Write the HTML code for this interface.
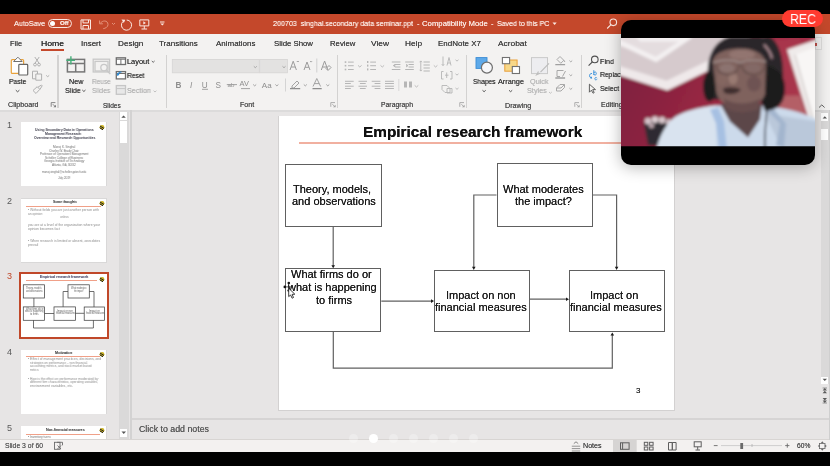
<!DOCTYPE html>
<html><head><meta charset="utf-8"><style>
*{box-sizing:border-box;margin:0;padding:0}
html,body{width:830px;height:466px;overflow:hidden;background:#000}
body{position:relative;font-family:"Liberation Sans",sans-serif;-webkit-font-smoothing:antialiased}
.a{position:absolute}
.t{position:absolute;white-space:nowrap;line-height:1;will-change:transform;text-shadow:0 0 0.25px currentColor}
.box{position:absolute;border:1.3px solid #606060;background:#fff}
.thumb{position:absolute;background:#fff;overflow:hidden}
svg{position:absolute;overflow:visible}
</style></head><body>
<div class="a" style="left:0px;top:13.6px;width:830px;height:20.6px;background:#C4482B;"></div>
<div class="a" style="left:0px;top:34px;width:830px;height:76px;background:#F3F2F1;"></div>
<div class="a" style="left:0px;top:110px;width:830px;height:2px;background:#DCDBDB;"></div>
<div class="a" style="left:0px;top:112px;width:130px;height:328px;background:#E7E5E5;"></div>
<div class="a" style="left:130px;top:110px;width:2px;height:330px;background:#D3D2D2;"></div>
<div class="a" style="left:132px;top:112px;width:698px;height:306px;background:#E7E5E5;"></div>
<div class="a" style="left:132px;top:419px;width:698px;height:21px;background:#E7E5E5;"></div>
<div class="a" style="left:132px;top:418.2px;width:698px;height:1.5px;background:#D6D4D4;"></div>
<div class="a" style="left:0px;top:440px;width:830px;height:12px;background:#F3F1F0;"></div>
<div class="t" style="left:13.6px;top:19.68px;font-size:7.7px;color:#FAE8E2;transform:scaleX(0.9357);transform-origin:0 0;">AutoSave</div>
<div class="a" style="left:48px;top:18.5px;width:24px;height:9.8px;border:1px solid #FAE8E2;border-radius:5px"></div>
<div class="a" style="left:50.4px;top:21px;width:5px;height:5px;background:#fff;border-radius:50%"></div>
<div class="t" style="left:59.5px;top:20.45px;font-size:6.2px;color:#FAE8E2;font-weight:bold;transform:scaleX(0.9622);transform-origin:0 0;">Off</div>
<div class="t" style="left:272.9px;top:19.56px;font-size:7.6px;color:#FAE8E2;transform:scaleX(0.9394);transform-origin:0 0;">200703&nbsp; singhal.secondary data seminar.ppt</div>
<div class="t" style="left:417.0px;top:19.65px;font-size:7.5px;color:#FAE8E2;">-</div>
<div class="t" style="left:422.3px;top:19.56px;font-size:7.6px;color:#FAE8E2;transform:scaleX(1.0189);transform-origin:0 0;">Compatibility Mode</div>
<div class="t" style="left:491.0px;top:19.65px;font-size:7.5px;color:#FAE8E2;">-</div>
<div class="t" style="left:496.5px;top:19.56px;font-size:7.6px;color:#FAE8E2;transform:scaleX(0.9264);transform-origin:0 0;">Saved to this PC</div>
<svg style="left:0;top:0" width="830" height="40">
<g fill="none" stroke="#FAE8E2" stroke-width="1">
<path d="M81 19.9h9.5v9.2h-9.5z"/><path d="M83 19.9v3h5.5v-3"/><path d="M83 29.1v-3.6h5.5v3.6"/>
<path d="M122.8 21.6a5.1 5.1 0 1 0 3.9 -1.6"/>
<path d="M139.8 19.9h9v6h-9z"/><path d="M144.3 25.9v3M141.5 29h5.6"/>
<path d="M160 22h4.5"/>
</g>
<path d="M121.5 19.5l3.8 0.3l-1.5 3.3z" fill="#FAE8E2"/>
<path d="M143.3 21.3v3.2l2.6-1.6z" fill="#FAE8E2"/>
<path d="M160.3 23.6h4l-2 2z" fill="#FAE8E2"/>
<g fill="none" stroke="#E3917A" stroke-width="1">
<path d="M100.3 23.3c2-3 7.5-3.5 7.7 1.2c0.1 2.5-2.5 3.8-4.8 4.2"/><path d="M99.6 20.5v3.3h3.3"/>
<path d="M112 23l1.5 1.5l1.5-1.5"/>
</g>
<path d="M552.5 22.5h4.2l-2.1 2.6z" fill="#FAE8E2"/>
<g fill="none" stroke="#FAE8E2" stroke-width="1.1"><circle cx="613.3" cy="22.3" r="3.3"/><path d="M611 24.7l-3.8 3.8"/></g>
</svg>
<div class="t" style="left:10.0px;top:39.76px;font-size:7.6px;color:#454545;transform:scaleX(0.9796);transform-origin:0 0;">File</div>
<div class="t" style="left:80.5px;top:39.76px;font-size:7.6px;color:#454545;transform:scaleX(1.0526);transform-origin:0 0;">Insert</div>
<div class="t" style="left:117.5px;top:39.76px;font-size:7.6px;color:#454545;transform:scaleX(1.0744);transform-origin:0 0;">Design</div>
<div class="t" style="left:159.1px;top:39.76px;font-size:7.6px;color:#454545;transform:scaleX(1.0526);transform-origin:0 0;">Transitions</div>
<div class="t" style="left:215.7px;top:39.76px;font-size:7.6px;color:#454545;transform:scaleX(1.0511);transform-origin:0 0;">Animations</div>
<div class="t" style="left:273.9px;top:39.76px;font-size:7.6px;color:#454545;transform:scaleX(1.0263);transform-origin:0 0;">Slide Show</div>
<div class="t" style="left:329.5px;top:39.76px;font-size:7.6px;color:#454545;transform:scaleX(1.0198);transform-origin:0 0;">Review</div>
<div class="t" style="left:370.5px;top:39.76px;font-size:7.6px;color:#454545;transform:scaleX(1.1024);transform-origin:0 0;">View</div>
<div class="t" style="left:404.5px;top:39.76px;font-size:7.6px;color:#454545;transform:scaleX(1.0880);transform-origin:0 0;">Help</div>
<div class="t" style="left:438.4px;top:39.76px;font-size:7.6px;color:#454545;transform:scaleX(1.0500);transform-origin:0 0;">EndNote X7</div>
<div class="t" style="left:498.1px;top:39.76px;font-size:7.6px;color:#454545;transform:scaleX(1.1004);transform-origin:0 0;">Acrobat</div>
<div class="t" style="left:41.2px;top:39.59px;font-size:7.8px;color:#2a2a2a;transform:scaleX(1.1051);transform-origin:0 0;text-shadow:0 0 0.6px #2a2a2a">Home</div>
<div class="a" style="left:41px;top:49px;width:23px;height:2px;background:#C4482B;"></div>
<div class="t" style="left:8.2px;top:102.14px;font-size:7.15px;color:#505050;">Clipboard</div>
<div class="t" style="left:103.1px;top:102.69px;font-size:6.5px;color:#505050;">Slides</div>
<div class="t" style="left:239.6px;top:102.15px;font-size:7.14px;color:#505050;">Font</div>
<div class="t" style="left:380.6px;top:102.40px;font-size:6.85px;color:#505050;">Paragraph</div>
<div class="t" style="left:505.1px;top:102.10px;font-size:7.2px;color:#505050;">Drawing</div>
<div class="t" style="left:600.6px;top:102.19px;font-size:7.1px;color:#505050;">Editing</div>
<div class="a" style="left:57.4px;top:54.6px;width:1.2px;height:53px;background:#D3D2D1;"></div>
<div class="a" style="left:166.0px;top:54.6px;width:1.2px;height:53px;background:#D3D2D1;"></div>
<div class="a" style="left:336.8px;top:54.6px;width:1.2px;height:53px;background:#D3D2D1;"></div>
<div class="a" style="left:465.8px;top:54.6px;width:1.2px;height:53px;background:#D3D2D1;"></div>
<div class="a" style="left:580.8px;top:54.6px;width:1.2px;height:53px;background:#D3D2D1;"></div>
<div class="t" style="left:9.0px;top:78.12px;font-size:7.3px;color:#3F3F3F;transform:scaleX(0.9319);transform-origin:0 0;">Paste</div>
<div class="t" style="left:68.9px;top:77.82px;font-size:7.3px;color:#3F3F3F;transform:scaleX(0.9857);transform-origin:0 0;">New</div>
<div class="t" style="left:64.6px;top:87.02px;font-size:7.3px;color:#3F3F3F;transform:scaleX(0.9609);transform-origin:0 0;">Slide</div>
<div class="t" style="left:91.8px;top:77.82px;font-size:7.3px;color:#B8B8B8;transform:scaleX(0.8818);transform-origin:0 0;">Reuse</div>
<div class="t" style="left:92.2px;top:87.02px;font-size:7.3px;color:#B8B8B8;transform:scaleX(0.9157);transform-origin:0 0;">Slides</div>
<div class="t" style="left:127.2px;top:58.12px;font-size:7.3px;color:#3F3F3F;transform:scaleX(1.0127);transform-origin:0 0;">Layout</div>
<div class="t" style="left:127.2px;top:72.42px;font-size:7.3px;color:#3F3F3F;transform:scaleX(0.9128);transform-origin:0 0;">Reset</div>
<div class="t" style="left:127.2px;top:86.62px;font-size:7.3px;color:#B5B5B5;transform:scaleX(0.9777);transform-origin:0 0;">Section</div>
<div class="t" style="left:472.6px;top:77.62px;font-size:7.3px;color:#3F3F3F;transform:scaleX(0.9131);transform-origin:0 0;">Shapes</div>
<div class="t" style="left:498.2px;top:77.62px;font-size:7.3px;color:#3F3F3F;transform:scaleX(0.9935);transform-origin:0 0;">Arrange</div>
<div class="t" style="left:529.9px;top:77.62px;font-size:7.3px;color:#B8B8B8;transform:scaleX(0.9863);transform-origin:0 0;">Quick</div>
<div class="t" style="left:526.6px;top:87.42px;font-size:7.3px;color:#B8B8B8;transform:scaleX(0.9862);transform-origin:0 0;">Styles</div>
<div class="t" style="left:599.8px;top:57.52px;font-size:7.3px;color:#3F3F3F;transform:scaleX(0.9716);transform-origin:0 0;">Find</div>
<div class="t" style="left:599.8px;top:71.32px;font-size:7.3px;color:#3F3F3F;transform:scaleX(0.9148);transform-origin:0 0;">Replace</div>
<div class="t" style="left:599.8px;top:85.42px;font-size:7.3px;color:#3F3F3F;transform:scaleX(0.9368);transform-origin:0 0;">Select</div>
<svg style="left:0;top:0" width="830" height="112">
<!-- paste -->
<rect x="11.3" y="59.6" width="12.3" height="13.8" rx="1" fill="#fff" stroke="#E9A23B" stroke-width="1.2"/>
<path d="M13.6 61.5l4.3-4.3l4.3 4.3z" fill="#fff" stroke="#707070" stroke-width="1"/>
<rect x="18.8" y="64.4" width="8.9" height="10.6" rx="0.8" fill="#fff" stroke="#666" stroke-width="1.2"/>
<path d="M15.8 90.2l1.8 1.6l1.8-1.6" fill="none" stroke="#555" stroke-width="1"/>
<!-- cut / copy / painter (disabled) -->
<g fill="none" stroke="#B0B0B0" stroke-width="1">
<path d="M34.8 57l4.2 6.2M39.2 57l-4.2 6.2"/><circle cx="35" cy="64.6" r="1.4"/><circle cx="39" cy="64.6" r="1.4"/>
<path d="M32.5 71.2h5v7.6h-5z"/><path d="M35.8 74h5.8v6.2h-5.8z" fill="#F3F2F1"/>
<path d="M46.2 75.4l1.5 1.3l1.5-1.3"/>
<path d="M33 90.5l4.2-3.8l2.6 2.6l-3.8 4.2z"/><path d="M37.8 87.3l3.6-2.3l0.8 0.8l-2.3 3.6"/>
</g>
<!-- launcher clipboard -->
<path d="M51.2 106.8v-4.2h4.2M52.8 104.2l2.6 2.6" fill="none" stroke="#7A7A7A" stroke-width="0.9"/><path d="M56 107.3h-2.6l2.6-2.6z" fill="#7A7A7A"/>
<!-- new slide -->
<g fill="none" stroke="#767676" stroke-width="1.5">
<rect x="67.4" y="59.4" width="17.2" height="12.5"/>
<path d="M67.4 63.6h17.2M75.7 63.6v8.3"/>
</g>
<path d="M66.3 60.2h8.7M70.9 56.2v8.3" stroke="#46B07A" stroke-width="1.4"/>
<path d="M82.3 90l1.6 1.5l1.6-1.5" fill="none" stroke="#555" stroke-width="1"/>
<!-- reuse slides (disabled) -->
<g fill="none" stroke="#C8C8C8" stroke-width="1.3">
<rect x="93.2" y="59.2" width="16.4" height="12.8"/><rect x="95" y="61.4" width="13" height="9.6"/>
<circle cx="104" cy="67.6" r="3.2"/><path d="M106.3 70l4 4"/>
</g>
<!-- layout / reset / section -->
<rect x="116.3" y="57.8" width="9.2" height="6.7" fill="#fff" stroke="#6F6F6F" stroke-width="1.3"/>
<path d="M116.3 59.2h9.2M120.9 59.2v5.3" stroke="#6F6F6F" stroke-width="1"/>
<path d="M151.8 61l1.4 1.3l1.4-1.3" fill="none" stroke="#555" stroke-width="0.9"/>
<rect x="116.3" y="71.6" width="9.2" height="7.3" fill="#fff" stroke="#6F6F6F" stroke-width="1.3"/>
<path d="M116.3 73.5h9.2" stroke="#6F6F6F" stroke-width="1"/>
<path d="M117.5 75.5c0.5-2.5 2-3.5 4-3.5" fill="none" stroke="#2B8CD8" stroke-width="1.2"/><path d="M116.6 73.3l1.2 2.8l1.8-2.2z" fill="#2B8CD8"/>
<rect x="116.3" y="85.6" width="9.2" height="8.7" fill="#E8E8E8" stroke="#C6C6C6" stroke-width="1.3"/>
<path d="M116.3 88.6h9.2" stroke="#C6C6C6" stroke-width="1"/>
<path d="M153.6 90.7l1.4 1.3l1.4-1.3" fill="none" stroke="#BBB" stroke-width="0.9"/>
<!-- font boxes -->
<rect x="172.3" y="59.4" width="87" height="13.4" fill="#E3E2E1" stroke="#D6D5D4" stroke-width="0.8"/>
<rect x="259.7" y="59.4" width="27.8" height="13.4" fill="#E3E2E1" stroke="#D6D5D4" stroke-width="0.8"/>
<path d="M253.8 66.3l1.5 1.4l1.5-1.4M282.5 66.3l1.5 1.4l1.5-1.4" fill="none" stroke="#A0A0A0" stroke-width="0.9"/>
<g fill="none" stroke="#9A9A9A" stroke-width="1">
<path d="M290 70l3.2-8.8l3.2 8.8M291.2 67h4"/><path d="M296.8 62l1 -1l1 1"/>
<path d="M304 70l3-8l3 8M305.1 67.3h3.8"/><path d="M310.2 61.2l0.9 0.9l0.9-0.9"/>
<path d="M316.8 58.5v14" stroke="#D0D0D0"/>
<path d="M321.3 70l3.3-9l3.3 9M322.5 67h4.2"/><path d="M326 68.5l3-3l2 2l-3 3z"/>
</g>
<g fill="#8E8E8E" font-family="Liberation Sans" font-size="8.2">
<text x="175.6" y="87.8" font-weight="bold">B</text>
<text x="190" y="87.8" font-style="italic">I</text>
<text x="201.8" y="87.6">U</text>
<text x="215.6" y="87.8">S</text>
<text x="227.5" y="87.3" font-size="6.2">ab</text>
<text x="239.6" y="86.4" font-size="7.4">AV</text>
<text x="261.8" y="87.8" font-size="8">Aa</text>
</g>
<g fill="none" stroke="#9A9A9A" stroke-width="0.9">
<path d="M202 89.3h6M226.8 84.6h10.2M241 88.6h9"/>
<path d="M253.2 84.5l1.5 1.4l1.5-1.4M275.4 84.5l1.5 1.4l1.5-1.4M303.8 84.5l1.5 1.4l1.5-1.4M326.3 84.5l1.5 1.4l1.5-1.4"/>
<path d="M285.5 78.5v13" stroke="#D0D0D0"/>
<path d="M292 86l5-5l2 2l-5 5h-2z"/><path d="M313 86.5l3.8-8l3.8 8M314.4 83.6h4.8"/>
</g>
<path d="M290 88.7h10.2M312.5 88.7h9.2" stroke="#8E8E8E" stroke-width="1.3"/>
<path d="M330.8 106.8v-4.2h4.2M332.4 104.2l2.6 2.6" fill="none" stroke="#A5A5A5" stroke-width="0.9"/><path d="M335.6 107.3h-2.6l2.6-2.6z" fill="#A5A5A5"/>
<!-- paragraph -->
<g fill="#B6B6B6">
<rect x="344.7" y="61.3" width="1.6" height="1.6"/><rect x="344.7" y="64.9" width="1.6" height="1.6"/><rect x="344.7" y="68.7" width="1.6" height="1.6"/>
<rect x="348" y="61.6" width="5.7" height="1"/><rect x="348" y="65.2" width="5.7" height="1"/><rect x="348" y="69" width="5.7" height="1"/>
<rect x="367" y="61" width="1.4" height="2"/><rect x="367" y="64.6" width="1.4" height="2"/><rect x="367" y="68.4" width="1.4" height="2"/>
<rect x="370.2" y="61.6" width="5.8" height="1"/><rect x="370.2" y="65.2" width="5.8" height="1"/><rect x="370.2" y="69" width="5.8" height="1"/>
<rect x="391.8" y="61.5" width="8.6" height="1"/><rect x="395" y="64" width="5.4" height="1"/><rect x="395" y="66.5" width="5.4" height="1"/><rect x="391.8" y="69" width="8.6" height="1"/>
<rect x="405.2" y="61.5" width="8.6" height="1"/><rect x="408.6" y="64" width="5.2" height="1"/><rect x="408.6" y="66.5" width="5.2" height="1"/><rect x="405.2" y="69" width="8.6" height="1"/>
<rect x="423.5" y="61.5" width="6.3" height="1"/><rect x="423.5" y="64.5" width="6.3" height="1"/><rect x="423.5" y="67.5" width="6.3" height="1"/><rect x="423.5" y="70.5" width="6.3" height="1"/>
<rect x="345" y="80.8" width="8.7" height="1"/><rect x="345" y="83" width="5.8" height="1"/><rect x="345" y="85.7" width="8.7" height="1"/><rect x="345" y="88" width="5.8" height="1"/>
<rect x="358.5" y="80.8" width="8.5" height="1"/><rect x="359.9" y="83" width="5.8" height="1"/><rect x="358.5" y="85.7" width="8.5" height="1"/><rect x="359.9" y="88" width="5.8" height="1"/>
<rect x="371.7" y="80.8" width="8.7" height="1"/><rect x="374.6" y="83" width="5.8" height="1"/><rect x="371.7" y="85.7" width="8.7" height="1"/><rect x="374.6" y="88" width="5.8" height="1"/>
<rect x="385" y="80.8" width="8.9" height="1"/><rect x="385" y="83" width="8.9" height="1"/><rect x="385" y="85.7" width="8.9" height="1"/><rect x="385" y="88" width="8.9" height="1"/>
<rect x="404" y="81.5" width="3" height="6"/><rect x="409" y="81.5" width="3" height="6"/>
</g>
<g fill="none" stroke="#B6B6B6" stroke-width="0.9">
<path d="M358 65.4l1.8 1.6l1.8-1.6M380.5 65.4l1.8 1.6l1.8-1.6M433.8 65.4l1.8 1.6l1.8-1.6M414.7 85.4l1.8 1.6l1.8-1.6"/>
<path d="M393.3 65.6l1.5-1.2v2.4zM406.2 64.3l1.8 1.3l-1.8 1.3" fill="#B6B6B6"/>
<path d="M420.8 61v10M419.7 62.2l1.1-1.3l1.1 1.3M419.7 69.8l1.1 1.3l1.1-1.3"/>
<path d="M398.8 79v12" stroke="#D6D6D6"/>
<path d="M443 56.5v9M441.8 64.2l1.2 1.4l1.2-1.4M447 65.5l2-8l2 8M447.6 63h2.8"/>
<path d="M455.5 59.8l1.5 1.3l1.5-1.3M455.5 73.8l1.5 1.3l1.5-1.3M455.5 88l1.5 1.3l1.5-1.3"/>
<path d="M441.5 71.5h2M441.5 71.5v7.5h2M450 71.5h2v7.5h-2M446.7 72.5v5.5M445 75.2h3.5"/>
<path d="M442 85.5h5l3 3v4h-5l-3-3z"/><path d="M447 88.5h5v4.5h-5z"/>
</g>
<path d="M459.8 106.8v-4.2h4.2M461.4 104.2l2.6 2.6" fill="none" stroke="#A5A5A5" stroke-width="0.9"/><path d="M464.6 107.3h-2.6l2.6-2.6z" fill="#A5A5A5"/>
<!-- drawing -->
<rect x="476" y="57.6" width="11" height="10.8" fill="#5EA9E9" stroke="#3A8CD5" stroke-width="0.9"/>
<circle cx="486.9" cy="67.6" r="5.5" fill="#F7F7F9" stroke="#6E6E6E" stroke-width="1.2"/>
<path d="M482.5 90.3l1.6 1.4l1.6-1.4M509 90.3l1.6 1.4l1.6-1.4" fill="none" stroke="#555" stroke-width="1"/>
<rect x="504.8" y="60" width="12.3" height="11.2" fill="#F8D888" stroke="#E9A03B" stroke-width="1"/>
<rect x="502.4" y="57.5" width="7.2" height="6.2" fill="#fff" stroke="#717171" stroke-width="1.1"/>
<rect x="512.3" y="66.5" width="7.2" height="7" fill="#fff" stroke="#717171" stroke-width="1.1"/>
<rect x="531.5" y="57.6" width="16" height="16" fill="#EDEDF0" stroke="#C9C9C9" stroke-width="1"/>
<path d="M549 63.4l-8.5 8.8M538.5 71.5l-1.8 3.2l3.2-1.5" fill="none" stroke="#BDBDBD" stroke-width="1.2"/>
<path d="M549 92l1.4 1.3l1.4-1.3" fill="none" stroke="#BBB" stroke-width="0.9"/>
<g fill="none" stroke="#A8A8A8" stroke-width="1">
<path d="M557 59.5l3-3l3.8 3.8l-3 3z"/><path d="M563.5 60l1.5 2"/>
<path d="M557 70.5h6.5M557 70.5v6h3M562.5 76.5l3-5.5"/>
<path d="M556.5 88l3.5-3.5h4.5l-3.5 3.5zM556.5 88v3h4.5l3.5-3.5v-3"/>
<path d="M569.4 60.6l1.4 1.3l1.4-1.3M569.4 74.5l1.4 1.3l1.4-1.3M569.4 88.1l1.4 1.3l1.4-1.3"/>
</g>
<path d="M555.3 64.6h9.8M555.3 78h9.8" stroke="#A0A0A0" stroke-width="1.3"/>
<path d="M574.8 106.8v-4.2h4.2M576.4 104.2l2.6 2.6" fill="none" stroke="#A5A5A5" stroke-width="0.9"/><path d="M579.6 107.3h-2.6l2.6-2.6z" fill="#A5A5A5"/>
<!-- editing -->
<circle cx="594.8" cy="59.4" r="3.3" fill="none" stroke="#505050" stroke-width="1.1"/>
<path d="M592.4 61.8l-3.8 3.8" stroke="#505050" stroke-width="1.2"/>
<g fill="none" stroke="#2F8BD8" stroke-width="0.9">
<path d="M592 73.5c-3-0.5-3.5 4.5-0.2 4.5M590.2 77.8l1.5 0.3l-0.6-1.5"/>
<path d="M593.8 70.2v4.8M593.8 73c0.3-1.5 2.5-1.5 2.5 0.5c0 2-2.2 2-2.5 0.5"/>
<path d="M597 78.2c-0.5-1-2-1-2.2 0.5c0 1.5 1.7 1.5 2.2 0.5"/>
</g>
<path d="M589.4 84.2v8l2-2l1.6 3l1.2-0.6l-1.5-3h2.8z" fill="none" stroke="#505050" stroke-width="0.9"/>
</svg>
<div class="t" style="left:7.2px;top:120.68px;font-size:9px;color:#595959;text-shadow:none">1</div>
<div class="t" style="left:7.2px;top:197.18px;font-size:9px;color:#595959;text-shadow:none">2</div>
<div class="t" style="left:7.2px;top:272.38px;font-size:9px;color:#C0482A;text-shadow:none">3</div>
<div class="t" style="left:7.2px;top:348.38px;font-size:9px;color:#595959;text-shadow:none">4</div>
<div class="t" style="left:7.2px;top:424.38px;font-size:9px;color:#595959;text-shadow:none">5</div>
<div class="a" style="left:20.6px;top:121.89999999999999px;width:86px;height:64.3px;background:#D9D8D8;"></div>
<div class="a" style="left:21.2px;top:122.3px;width:85px;height:63.5px;background:#fff;"></div>
<div class="t" style="left:35.0px;top:129.30px;font-size:3.5px;color:#3A3A48;font-weight:bold;transform:scaleX(0.9674);transform-origin:0 0;text-shadow:none">Using Secondary Data in Operations</div>
<div class="t" style="left:45.0px;top:133.00px;font-size:3.5px;color:#3A3A48;font-weight:bold;transform:scaleX(0.9331);transform-origin:0 0;text-shadow:none">Management Research:</div>
<div class="t" style="left:33.5px;top:137.20px;font-size:3.5px;color:#3A3A48;font-weight:bold;transform:scaleX(0.9663);transform-origin:0 0;text-shadow:none">Overview and Research Opportunities</div>
<div class="t" style="left:52.8px;top:146.39px;font-size:3.3px;color:#6E6E6E;transform:scaleX(0.8922);transform-origin:0 0;text-shadow:none">Manoj K. Singhal</div>
<div class="t" style="left:49.0px;top:149.89px;font-size:3.3px;color:#6E6E6E;transform:scaleX(0.8670);transform-origin:0 0;text-shadow:none">Charles W. Brady Chair</div>
<div class="t" style="left:40.0px;top:153.39px;font-size:3.3px;color:#6E6E6E;transform:scaleX(0.8804);transform-origin:0 0;text-shadow:none">Professor of Operations Management</div>
<div class="t" style="left:45.0px;top:156.89px;font-size:3.3px;color:#6E6E6E;transform:scaleX(0.9081);transform-origin:0 0;text-shadow:none">Scheller College of Business</div>
<div class="t" style="left:44.0px;top:160.39px;font-size:3.3px;color:#6E6E6E;transform:scaleX(0.8847);transform-origin:0 0;text-shadow:none">Georgia Institute of Technology</div>
<div class="t" style="left:52.0px;top:163.89px;font-size:3.3px;color:#6E6E6E;transform:scaleX(0.8503);transform-origin:0 0;text-shadow:none">Atlanta, GA, 30332</div>
<div class="t" style="left:42.0px;top:170.89px;font-size:3.3px;color:#6E6E6E;transform:scaleX(0.8499);transform-origin:0 0;text-shadow:none">manoj.singhal@scheller.gatech.edu</div>
<div class="t" style="left:58.0px;top:177.39px;font-size:3.3px;color:#6E6E6E;transform:scaleX(0.8750);transform-origin:0 0;text-shadow:none">July 2019</div>
<svg style="left:98.5px;top:123.5px" width="6" height="6"><ellipse cx="3" cy="3.2" rx="2.4" ry="2.2" fill="#C9B020"/><path d="M1 2l4 2.5M0.8 3.8l3.2 2" stroke="#222" stroke-width="1"/></svg>
<div class="a" style="left:20.6px;top:198.4px;width:86px;height:64.3px;background:#D9D8D8;"></div>
<div class="a" style="left:21.2px;top:198.8px;width:85px;height:63.5px;background:#fff;"></div>
<div class="t" style="left:52.6px;top:200.65px;font-size:3.8px;color:#222;font-weight:bold;transform:scaleX(0.8683);transform-origin:0 0;text-shadow:none">Some thoughts</div>
<div class="a" style="left:26.3px;top:205.8px;width:75.1px;height:1.0px;background:#F0A088;"></div>
<div class="t" style="left:28.0px;top:208.89px;font-size:3.3px;color:#8C8C8C;transform:scaleX(1.0196);transform-origin:0 0;text-shadow:none">&bull; Without fields you are just another person with</div>
<div class="t" style="left:28.0px;top:212.89px;font-size:3.3px;color:#8C8C8C;transform:scaleX(0.9475);transform-origin:0 0;text-shadow:none">an opinion</div>
<div class="t" style="left:60.0px;top:216.39px;font-size:3.3px;color:#8C8C8C;transform:scaleX(0.8645);transform-origin:0 0;text-shadow:none">unless</div>
<div class="t" style="left:28.0px;top:224.39px;font-size:3.3px;color:#8C8C8C;transform:scaleX(1.0243);transform-origin:0 0;text-shadow:none">you are at a level of the organization where your</div>
<div class="t" style="left:28.0px;top:228.39px;font-size:3.3px;color:#8C8C8C;transform:scaleX(1.0248);transform-origin:0 0;text-shadow:none">opinion becomes fact</div>
<div class="t" style="left:28.0px;top:240.39px;font-size:3.3px;color:#8C8C8C;transform:scaleX(1.0318);transform-origin:0 0;text-shadow:none">&bull; When research is limited or absent, anecdotes</div>
<div class="t" style="left:28.0px;top:244.39px;font-size:3.3px;color:#8C8C8C;transform:scaleX(1.0598);transform-origin:0 0;text-shadow:none">prevail</div>
<svg style="left:99px;top:200px" width="6" height="6"><ellipse cx="3" cy="3.2" rx="2.4" ry="2.2" fill="#C9B020"/><path d="M1 2l4 2.5M0.8 3.8l3.2 2" stroke="#222" stroke-width="1"/></svg>
<div class="a" style="left:19px;top:272px;width:90px;height:66.6px;background:#C0482A;"></div>
<div class="a" style="left:21px;top:274px;width:86px;height:62.6px;background:#fff;"></div>
<div class="t" style="left:39.8px;top:275.65px;font-size:3.8px;color:#2A2A50;font-weight:bold;transform:scaleX(0.8886);transform-origin:0 0;text-shadow:none">Empirical research framework</div>
<div class="a" style="left:26.3px;top:279.7px;width:70.7px;height:1.0px;background:#F0A088;"></div>
<svg style="left:99px;top:275.5px" width="6" height="6"><ellipse cx="3" cy="3.2" rx="2.4" ry="2.2" fill="#C9B020"/><path d="M1 2l4 2.5M0.8 3.8l3.2 2" stroke="#222" stroke-width="1"/></svg>
<svg style="left:0;top:0" width="130" height="440"><g fill="none" stroke="#404040" stroke-width="0.75">
<rect x="23.3" y="284.8" width="21.2" height="13.2"/>
<rect x="23.3" y="306.9" width="21.2" height="13.4"/>
<rect x="54" y="306.9" width="21.5" height="13.4"/>
<rect x="84.2" y="307" width="20.3" height="13.3"/>
<rect x="68" y="284.8" width="21.3" height="13.2"/>
<path d="M33.9 298V306.9M44.5 313.5H54M75.5 313.3H84.2M68 291.5H63.1V306.9M89.3 291.5H94V307M33.5 320.3V328H93.4V320.3"/>
</g></svg>
<div class="t" style="left:26.0px;top:288.33px;font-size:2.6px;color:#606060;transform:scaleX(0.8674);transform-origin:0 0;text-shadow:none">Theory, models,</div>
<div class="t" style="left:26.0px;top:290.93px;font-size:2.6px;color:#606060;transform:scaleX(0.8338);transform-origin:0 0;text-shadow:none">and observations</div>
<div class="t" style="left:25.5px;top:308.73px;font-size:2.6px;color:#606060;transform:scaleX(0.9201);transform-origin:0 0;text-shadow:none">What firms do or</div>
<div class="t" style="left:25.0px;top:311.33px;font-size:2.6px;color:#606060;transform:scaleX(0.8862);transform-origin:0 0;text-shadow:none">what is happening</div>
<div class="t" style="left:30.0px;top:313.93px;font-size:2.6px;color:#606060;transform:scaleX(0.9676);transform-origin:0 0;text-shadow:none">to firms</div>
<div class="t" style="left:57.0px;top:310.73px;font-size:2.6px;color:#606060;transform:scaleX(0.9703);transform-origin:0 0;text-shadow:none">Impact on non</div>
<div class="t" style="left:55.5px;top:313.33px;font-size:2.6px;color:#606060;transform:scaleX(0.8805);transform-origin:0 0;text-shadow:none">financial measures</div>
<div class="t" style="left:89.0px;top:310.73px;font-size:2.6px;color:#606060;transform:scaleX(0.9495);transform-origin:0 0;text-shadow:none">Impact on</div>
<div class="t" style="left:85.5px;top:313.33px;font-size:2.6px;color:#606060;transform:scaleX(0.8567);transform-origin:0 0;text-shadow:none">financial measures</div>
<div class="t" style="left:71.0px;top:288.33px;font-size:2.6px;color:#606060;transform:scaleX(0.8118);transform-origin:0 0;text-shadow:none">What moderates</div>
<div class="t" style="left:73.5px;top:290.93px;font-size:2.6px;color:#606060;transform:scaleX(0.7290);transform-origin:0 0;text-shadow:none">the impact?</div>
<div class="a" style="left:20.6px;top:349.6px;width:86px;height:64.3px;background:#D9D8D8;"></div>
<div class="a" style="left:21.2px;top:350px;width:85px;height:63.5px;background:#fff;"></div>
<div class="t" style="left:54.7px;top:351.75px;font-size:3.8px;color:#222;font-weight:bold;transform:scaleX(0.9061);transform-origin:0 0;text-shadow:none">Motivation</div>
<div class="a" style="left:26px;top:355.7px;width:74px;height:1.0px;background:#F0A088;"></div>
<div class="t" style="left:28.0px;top:358.39px;font-size:3.3px;color:#8C8C8C;transform:scaleX(1.0257);transform-origin:0 0;text-shadow:none">&bull; Effect of management practices, decisions, and</div>
<div class="t" style="left:30.0px;top:361.89px;font-size:3.3px;color:#8C8C8C;transform:scaleX(0.9393);transform-origin:0 0;text-shadow:none">strategies on performance &ndash; non financial,</div>
<div class="t" style="left:30.0px;top:365.39px;font-size:3.3px;color:#8C8C8C;transform:scaleX(0.9607);transform-origin:0 0;text-shadow:none">accounting metrics, and stock market based</div>
<div class="t" style="left:30.0px;top:369.39px;font-size:3.3px;color:#8C8C8C;transform:scaleX(0.7755);transform-origin:0 0;text-shadow:none">metrics</div>
<div class="t" style="left:28.0px;top:377.89px;font-size:3.3px;color:#8C8C8C;transform:scaleX(0.9800);transform-origin:0 0;text-shadow:none">&bull; How is the effect on performance moderated by</div>
<div class="t" style="left:30.0px;top:381.39px;font-size:3.3px;color:#8C8C8C;transform:scaleX(0.9594);transform-origin:0 0;text-shadow:none">different firm characteristics, operating variables,</div>
<div class="t" style="left:30.0px;top:385.39px;font-size:3.3px;color:#8C8C8C;transform:scaleX(1.0978);transform-origin:0 0;text-shadow:none">environment variables, etc.</div>
<svg style="left:99px;top:351px" width="6" height="6"><ellipse cx="3" cy="3.2" rx="2.4" ry="2.2" fill="#C9B020"/><path d="M1 2l4 2.5M0.8 3.8l3.2 2" stroke="#222" stroke-width="1"/></svg>
<div class="a" style="left:20.6px;top:425.6px;width:86px;height:14.4px;background:#D9D8D8"></div>
<div class="a" style="left:21.2px;top:426px;width:85px;height:14px;background:#fff"></div>
<div class="t" style="left:45.5px;top:428.85px;font-size:3.8px;color:#222;font-weight:bold;transform:scaleX(0.8991);transform-origin:0 0;text-shadow:none">Non-financial measures</div>
<div class="a" style="left:26px;top:433.9px;width:74px;height:1.0px;background:#F0A088;"></div>
<div class="t" style="left:28.0px;top:435.89px;font-size:3.3px;color:#707070;transform:scaleX(0.9485);transform-origin:0 0;text-shadow:none">&bull; Inventory turns</div>
<svg style="left:99px;top:427px" width="6" height="6"><ellipse cx="3" cy="3.2" rx="2.4" ry="2.2" fill="#C9B020"/><path d="M1 2l4 2.5M0.8 3.8l3.2 2" stroke="#222" stroke-width="1"/></svg>
<div class="a" style="left:118.5px;top:112px;width:10px;height:328px;background:#DAD9D9;"></div>
<div class="a" style="left:119.7px;top:112.4px;width:7.7px;height:7.8px;background:#fff;"></div>
<div class="a" style="left:119.7px;top:121.4px;width:7.7px;height:22px;background:#fff;"></div>
<div class="a" style="left:119.7px;top:428.8px;width:7.7px;height:8.4px;background:#fff;"></div>
<svg style="left:0;top:0" width="130" height="440"><path d="M121.3 117.8h4.5l-2.25-2.4z" fill="#555"/><path d="M121.5 431.5h4.5l-2.25 2.4z" fill="#555"/></svg>
<div class="a" style="left:277.8px;top:115.6px;width:397px;height:295.6px;background:#D3D1D1;"></div>
<div class="a" style="left:278.6px;top:116.4px;width:395.4px;height:294.0px;background:#fff;"></div>
<div class="a" style="left:299px;top:142px;width:356px;height:1.6px;background:#F1B0A0;"></div>
<div class="t" style="left:362.8px;top:124.00px;font-size:15.35px;color:#111;font-weight:bold;">Empirical research framework</div>
<div class="box" style="left:285.3px;top:163.5px;width:96.5px;height:63.3px"></div>
<div class="box" style="left:285.3px;top:268.3px;width:96.0px;height:63.3px"></div>
<div class="box" style="left:433.8px;top:269.8px;width:96.2px;height:62.6px"></div>
<div class="box" style="left:568.8px;top:269.8px;width:96.0px;height:62.6px"></div>
<div class="box" style="left:496.5px;top:163.3px;width:96.3px;height:63.3px"></div>
<svg style="left:0;top:0" width="830" height="466">
<g stroke="#606060" stroke-width="1.2" fill="none">
<path d="M333.2 226.8V266"/><path d="M381.3 301.1H431"/><path d="M530 299.2H566"/>
<path d="M496.5 195H473.8V267"/><path d="M592.8 195H616.6V267"/><path d="M333.3 331.6V368.2H612.3V335"/>
</g>
<g fill="#1a1a1a">
<path d="M331.4 265.2h3.6l-1.8 3.1z"/><path d="M431 299.3v3.6l3 -1.8z"/><path d="M566 297.4v3.6l3 -1.8z"/>
<path d="M472 266.8h3.6l-1.8 3.1z"/><path d="M614.8 266.8h3.6l-1.8 3.1z"/><path d="M610.5 335.5h3.6l-1.8 -3.1z"/>
</g></svg>
<div class="t" style="left:292.5px;top:183.68px;font-size:11.0px;color:#1a1a1a;">Theory, models,</div>
<div class="t" style="left:292.4px;top:196.18px;font-size:11.0px;color:#1a1a1a;">and observations</div>
<div class="t" style="left:291.0px;top:269.48px;font-size:11.0px;color:#1a1a1a;">What firms do or</div>
<div class="t" style="left:288.4px;top:282.28px;font-size:11.0px;color:#1a1a1a;">what is happening</div>
<div class="t" style="left:316.3px;top:295.18px;font-size:11.0px;color:#1a1a1a;">to firms</div>
<div class="t" style="left:446.3px;top:289.58px;font-size:11.0px;color:#1a1a1a;">Impact on non</div>
<div class="t" style="left:435.0px;top:301.78px;font-size:11.0px;color:#1a1a1a;">financial measures</div>
<div class="t" style="left:589.9px;top:289.58px;font-size:11.0px;color:#1a1a1a;">Impact on</div>
<div class="t" style="left:570.4px;top:301.78px;font-size:11.0px;color:#1a1a1a;">financial measures</div>
<div class="t" style="left:503.2px;top:183.58px;font-size:11.0px;color:#1a1a1a;">What moderates</div>
<div class="t" style="left:515.1px;top:195.88px;font-size:11.0px;color:#1a1a1a;">the impact?</div>
<div class="t" style="left:636.0px;top:386.72px;font-size:8px;color:#333;font-family:"Liberation Serif",serif">3</div>
<div class="t" style="left:138.5px;top:424.55px;font-size:8.8px;color:#5A5A5A;">Click to add notes</div>
<div class="t" style="left:5.0px;top:443.00px;font-size:6.85px;color:#5E5E5E;">Slide 3 of 60</div>
<svg style="left:0;top:0" width="830" height="466">
<g fill="none" stroke="#6A6A6A" stroke-width="0.9">
<rect x="54.5" y="442.3" width="5.5" height="7"/><path d="M57.5 445.5l3.5 3.5M61 445.5l-3.5 3.5"/><path d="M57 442.3h5.5v3"/>
</g>
<g fill="none" stroke="#6A6A6A" stroke-width="0.9">
<path d="M573.8 443.6l2.2-1.8l2.2 1.8" stroke-width="0.8"/><path d="M571.8 446.2h8.4M571.8 448.6h8.4M571.8 451h8.4" stroke-width="0.7"/>
</g>
<rect x="613" y="440" width="23.7" height="12" fill="#D6D4D3"/>
<g fill="none" stroke="#5E5E5E" stroke-width="1">
<rect x="620.5" y="442.8" width="8.6" height="6.5"/><path d="M622.6 442.8v6.5"/>
<rect x="644.3" y="442.3" width="3.5" height="3"/><rect x="649.6" y="442.3" width="3.5" height="3"/><rect x="644.3" y="447" width="3.5" height="3"/><rect x="649.6" y="447" width="3.5" height="3"/>
<path d="M668.5 442.5h3.8v7.5h-3.8zM672.3 442.5h3.8v7.5h-3.8z"/>
<rect x="694.2" y="441.8" width="7" height="5"/><path d="M697.7 446.8v3M695.5 450h4.5"/>
</g>
<path d="M713.8 445.6h3.8M785.2 445.6h4.2M787.3 443.5v4.2" stroke="#6A6A6A" stroke-width="0.9"/>
<path d="M721 445.6h61" stroke="#C4C4C4" stroke-width="0.8"/>
<rect x="740.3" y="443" width="2.8" height="6" fill="#6A6A6A"/>
<path d="M752 444v3" stroke="#B0B0B0" stroke-width="0.8"/>
<path d="M822.3 441.3l1.6 2h-3.2zM822.3 450.7l1.6-2h-3.2zM817.8 446l2-1.6v3.2zM826.8 446l-2-1.6v3.2z" fill="#6A6A6A"/>
<rect x="819.6" y="443.4" width="5.4" height="5.2" fill="none" stroke="#6A6A6A" stroke-width="0.8"/>
</svg>
<div class="t" style="left:582.6px;top:442.96px;font-size:6.9px;color:#505050;transform:scaleX(1.0324);transform-origin:0 0;">Notes</div>
<div class="t" style="left:796.8px;top:443.21px;font-size:6.6px;color:#505050;transform:scaleX(1.0149);transform-origin:0 0;">60%</div>
<div class="a" style="left:0px;top:439.2px;width:830px;height:0.8px;background:#D8D5D3;"></div>
<div class="a" style="left:349.4px;top:434.2px;width:8.8px;height:8.8px;border-radius:50%;background:rgba(255,255,255,0.28)"></div>
<div class="a" style="left:369.4px;top:434.2px;width:8.8px;height:8.8px;border-radius:50%;background:rgba(255,255,255,1.0)"></div>
<div class="a" style="left:389.4px;top:434.2px;width:8.8px;height:8.8px;border-radius:50%;background:rgba(255,255,255,0.28)"></div>
<div class="a" style="left:409.4px;top:434.2px;width:8.8px;height:8.8px;border-radius:50%;background:rgba(255,255,255,0.28)"></div>
<div class="a" style="left:429.4px;top:434.2px;width:8.8px;height:8.8px;border-radius:50%;background:rgba(255,255,255,0.28)"></div>
<div class="a" style="left:449.4px;top:434.2px;width:8.8px;height:8.8px;border-radius:50%;background:rgba(255,255,255,0.28)"></div>
<div class="a" style="left:469.4px;top:434.2px;width:8.8px;height:8.8px;border-radius:50%;background:rgba(255,255,255,0.28)"></div>
<div class="a" style="left:820.5px;top:110px;width:8.5px;height:274px;background:#DAD9D9;"></div>
<div class="a" style="left:821.3px;top:113px;width:7px;height:7.5px;background:#fff;"></div>
<div class="a" style="left:821.3px;top:128.8px;width:7px;height:11.4px;background:#fff;"></div>
<div class="a" style="left:821.3px;top:376.5px;width:7px;height:7.6px;background:#fff;"></div>
<div class="a" style="left:829.2px;top:110px;width:0.8px;height:330px;background:#CFCFCF;"></div>
<svg style="left:0;top:0" width="830" height="466">
<path d="M822.6 118.6h4.4l-2.2-2.3zM822.6 378.8h4.4l-2.2 2.3z" fill="#555"/>
<path d="M822.6 390.6l2.2-2.6l2.2 2.6zM822.6 393.2l2.2-2.4l2.2 2.4zM822.6 397.9l2.2 2.6l2.2-2.6zM822.6 400.6l2.2 2.4l2.2-2.4z" fill="#5A5A5A"/><path d="M822.6 388h4.4M822.6 403h4.4" stroke="#5A5A5A" stroke-width="0.6"/>
<path d="M819 107.5l2.8-2.6l2.8 2.6" fill="none" stroke="#555" stroke-width="0.9"/>
</svg>
<div class="a" style="left:815px;top:37px;width:7px;height:13.3px;background:#F6F5F4;border:0.6px solid #E0DFDE"></div>
<div class="a" style="left:815px;top:42.5px;width:2px;height:3.5px;background:#C0504A;"></div>
<div class="a" style="left:621px;top:20px;width:194px;height:145px;border-radius:10px;background:#000;box-shadow:0 2px 16px rgba(0,0,0,0.3)"></div>
<svg style="left:621px;top:38.4px" width="194" height="108.3" viewBox="621 38.4 194 108.3">
<defs>
<filter id="bl" x="-5%" y="-5%" width="110%" height="110%"><feGaussianBlur stdDeviation="1.7"/></filter>
<linearGradient id="wallg" x1="0" y1="0" x2="1" y2="0.3"><stop offset="0" stop-color="#78213F"/><stop offset="0.35" stop-color="#8A2240"/><stop offset="0.6" stop-color="#9C2843"/><stop offset="1" stop-color="#A8334A"/></linearGradient>
<clipPath id="vc"><rect x="621" y="38.4" width="194" height="108.3"/></clipPath>
</defs>
<g clip-path="url(#vc)"><g filter="url(#bl)">
<rect x="610" y="30" width="220" height="130" fill="url(#wallg)"/>
<path d="M770 40L800 40L812 140L790 140z" fill="#A8364C"/>
<path d="M776 96L800 96L810 130L784 130z" fill="#B45E66"/>
<!-- ceiling -->
<path d="M600 30H760L712 61L667 84L600 62z" fill="#D6CACD"/>
<path d="M600 30H700L656 58L600 40z" fill="#E4DDDF"/>
<path d="M630 30H700L686 42H640z" fill="#F3F0F1"/>
<path d="M616 41L656 60L690 37" fill="none" stroke="#F4F1F2" stroke-width="4.6"/>
<path d="M606 67L667 86L725 58" fill="none" stroke="#EFE9EA" stroke-width="9"/>
<ellipse cx="763" cy="39.5" rx="8" ry="2.5" fill="#F2F2F2"/>
<!-- door -->
<path d="M787 50L820 39L820 140L814 136z" fill="#EFEBEA"/>
<path d="M795 55L820 46L820 126L812.7 118z" fill="#F8F6F5"/>
<path d="M795 55L812.7 118" stroke="#CCC6C4" stroke-width="1.2"/>
<!-- flowers -->
<path d="M644 124C650 118 666 117 672 122L668 146L648 146z" fill="#2F2B31"/>
<circle cx="648" cy="121.5" r="3.4" fill="#D4C3C9"/><circle cx="655" cy="120" r="3.4" fill="#DDCDD2"/><circle cx="662" cy="120.5" r="3.4" fill="#D8C6CB"/><circle cx="668.5" cy="122.5" r="3" fill="#CDB9BF"/><circle cx="651.5" cy="126" r="2.6" fill="#B8A2AA"/>
<!-- shirt -->
<path d="M657 147C660 135 668 122 676 117C686 111 700 108 716 106L764 106C782 108 800 112 818 120L818 150L657 150z" fill="#CCDAEB"/>
<path d="M676 117C684 112 700 108 716 106L716 150L657 150C660 135 668 122 676 117z" fill="#D9E3EF"/>
<path d="M710 110L716 124L719 150L727 150L724 122L718 108z" fill="#A6C0E2"/>
<path d="M762 108L778 116L818 122L818 150L782 150z" fill="#BAC8DA"/>
<path d="M768 112L780 124L776 146L784 148L786 124L774 110z" fill="#A3B5CE"/>
<!-- neck -->
<path d="M720 104L762 104L760 120L748 138L730 122z" fill="#5C4649"/>
<!-- head back (hair/headband) -->
<path d="M708 80C706 58 713 42 730 37L770 37C780 44 784 60 783 82L772 100L712 100z" fill="#2C272A"/>
<path d="M764 45C768 49 771 54 772 59" stroke="#B8949C" stroke-width="1.8" fill="none"/>
<!-- headphone cups -->
<ellipse cx="709.5" cy="87" rx="6.5" ry="15" fill="#1D1A1D"/>
<path d="M762 66C774 64 785 74 785 89C785 104 777 112 765 111L760 100z" fill="#1E1B1E"/>
<!-- face -->
<path d="M713 62C714 53 726 49 740 49C756 49 765 55 766 65L765 95C762 104 752 108 740 108C726 108 717 101 716 91z" fill="#7F625D"/>
<ellipse cx="742" cy="55" rx="13" ry="5" fill="#927570"/>
<ellipse cx="733" cy="79" rx="4.5" ry="6" fill="#997A72"/>
<ellipse cx="722" cy="80" rx="5" ry="6" fill="#846660"/>
<ellipse cx="754" cy="84" rx="7" ry="8" fill="#6E5252"/>
<path d="M723 89C728 87 736 87 741 90C738 95 728 96 724 93z" fill="#3F2E2F"/>
<path d="M724 99C732 105 750 106 760 99L758 110C748 114 732 114 726 108z" fill="#674D4D"/>
<!-- glasses -->
<path d="M713 63C723 60 733 60 740 63C747 60 757 60 766 62" fill="none" stroke="#A89896" stroke-width="1.3"/>
<path d="M716 64C716 72 722 76 730 75C737 74 739 69 739 64M741 64C742 70 746 75 754 75C762 75 765 70 765 63" fill="none" stroke="#5E4A48" stroke-width="1.2"/>
<ellipse cx="727" cy="68.5" rx="8" ry="4.5" fill="#9A8482" opacity="0.5"/>
<ellipse cx="753" cy="68.5" rx="8" ry="4.5" fill="#8A7472" opacity="0.45"/>
<!-- cable -->
<path d="M767 110C766 122 764 136 765 150" stroke="#1C1E28" stroke-width="1.4" fill="none"/>
</g></g>
</svg>
<div class="a" style="left:782px;top:9.8px;width:41.2px;height:17.4px;border-radius:8.7px;background:#FF3B30"></div>
<div class="t" style="left:790.2px;top:11.83px;font-size:14.6px;color:#fff;transform:scaleX(0.8438);transform-origin:0 0;text-shadow:none">REC</div>
<svg style="left:0;top:0" width="830" height="466">
<path d="M284.6 286.9h8M288.6 282.9v8" stroke="#222" stroke-width="0.8"/>
<circle cx="284.8" cy="286.9" r="1.3" fill="#111"/><circle cx="288.8" cy="283.1" r="1.3" fill="#111"/><circle cx="288.4" cy="290.6" r="1.1" fill="#111"/>
<path d="M288.7 288.2L288.7 296.6L290.6 295L292.1 298.2L293.5 297.5L292.1 294.4L294.8 294.2Z" fill="#fff" stroke="#1a1a1a" stroke-width="0.85" stroke-linejoin="round"/>
</svg>
</body></html>
